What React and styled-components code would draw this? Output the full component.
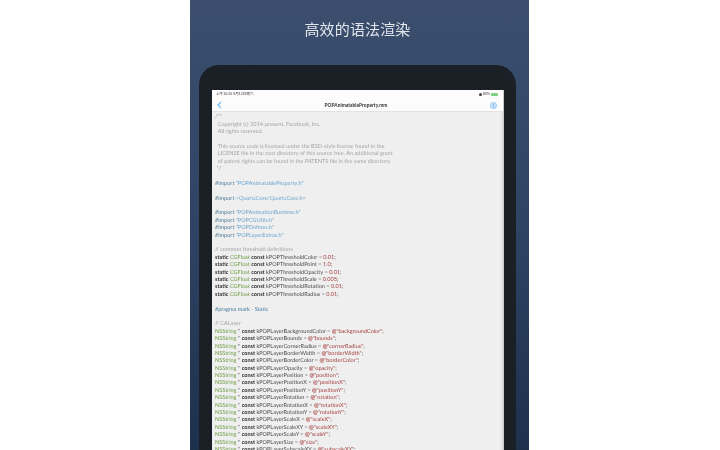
import React from 'react';
import styled, { createGlobalStyle } from 'styled-components';

const GlobalStyle = createGlobalStyle`
  html, body { margin: 0; padding: 0; background: #fff; }
  body { width: 720px; height: 450px; overflow: hidden; }
`;

const Page = styled.div`
  width: 720px;
  height: 450px;
  padding-left: 190px;
  box-sizing: border-box;
  display: flex;
  overflow: hidden;
`;

const Panel = styled.div`
  width: 339px;
  height: 450px;
  padding: 0 13px 0 9px;
  box-sizing: border-box;
  background: linear-gradient(180deg, #3b4e6e 0%, #2f4464 50%, #1d304c 100%);
  overflow: hidden;
`;

const Title = styled.h1`
  margin: 0;
  height: 65px;
  padding-top: 18px;
  box-sizing: border-box;
  text-align: center;
  font: 400 15px/22px "Noto Sans CJK SC", sans-serif;
  letter-spacing: 0.15px;
  color: #e3e6eb;
  filter: blur(0.45px);
`;

const Tablet = styled.div`
  height: 400px;
  padding: 25px 13px 0;
  box-sizing: border-box;
  background: #1b2027;
  border-radius: 20px 20px 0 0;
`;

const Screen = styled.div`
  height: 375px;
  margin-right: -1px;
  background: #efefef;
  overflow: hidden;
  display: flex;
  flex-direction: column;
  border-right: 1px solid #c9cacc;
`;

const StatusBar = styled.div`
  height: 9px;
  padding: 0 5px 0 4px;
  display: flex;
  align-items: center;
  justify-content: space-between;
  background: #fcfcfc;
  font: 400 3.6px/9px "Liberation Sans", "Noto Sans CJK SC", sans-serif;
  color: #333;
  filter: blur(0.45px);
`;

const StatusRight = styled.div`
  display: flex;
  align-items: center;
  gap: 1px;
`;

const Wifi = styled.span`
  width: 3px;
  height: 2.5px;
  border-radius: 50% 50% 50% 50% / 70% 70% 30% 30%;
  background: #444;
`;

const Battery = styled.span`
  width: 7px;
  height: 3px;
  border-radius: 1px;
  background: #7ed283;
`;

const NavBar = styled.div`
  height: 12px;
  padding: 0 6px 0 5px;
  display: flex;
  align-items: center;
  justify-content: space-between;
  background: #fcfcfc;
  border-bottom: 1px solid #e2e2e2;
  filter: blur(0.45px);
`;

const NavTitle = styled.span`
  font: 700 4.9px/12px "Lato", sans-serif;
  color: #333;
`;

const Body = styled.div`
  flex: 1;
  display: flex;
  overflow: hidden;
  filter: blur(0.6px);
`;

const Code = styled.div`
  flex: 1;
  padding: 2.4px 0 0 3px;
  overflow: hidden;
  font: 400 5.55px/7.4px "Lato", sans-serif;
  text-rendering: geometricPrecision;
  color: #555;
`;

const Scrollbar = styled.div`
  width: 2px;
  background: #e2e2e2;
`;

const Line = styled.div`
  height: 7.4px;
  white-space: pre;
`;

const palette = {
  c: ['#a4a4a4', 400],
  m: ['#4a7a9c', 400],
  s: ['#6ca6d0', 400],
  k: ['#2f2f2f', 700],
  t: ['#6f9f45', 400],
  n: ['#4a4a4a', 400],
  r: ['#a5403f', 400],
  a: ['#a5403f', 700],
};

const Tok = styled.span`
  color: ${p => palette[p.$kind][0]};
  font-weight: ${p => palette[p.$kind][1]};
`;

const threshold = (name, val) => [
  ['k', 'static '], ['t', 'CGFloat '], ['k', 'const '], ['n', name + ' = '], ['r', val], ['n', ';'],
];
const layerKey = (name, key) => [
  ['t', 'NSString'], ['n', ' * '], ['k', 'const '], ['n', 'kPOPLayer' + name + ' = '],
  ['a', '@'], ['r', '"' + key + '"'], ['n', ';'],
];
const imp = (s) => [['m', '#import '], ['s', s]];
const note = (s) => [['c', s]];

const lines = [
  note('/**'),
  note('  Copyright (c) 2014-present, Facebook, Inc.'),
  note('  All rights reserved.'),
  [],
  note('  This source code is licensed under the BSD-style license found in the'),
  note('  LICENSE file in the root directory of this source tree. An additional grant'),
  note('  of patent rights can be found in the PATENTS file in the same directory.'),
  note(' */'),
  [],
  imp('"POPAnimatableProperty.h"'),
  [],
  imp('<QuartzCore/QuartzCore.h>'),
  [],
  imp('"POPAnimationRuntime.h"'),
  imp('"POPCGUtils.h"'),
  imp('"POPDefines.h"'),
  imp('"POPLayerExtras.h"'),
  [],
  note('// common threshold definitions'),
  threshold('kPOPThresholdColor', '0.01'),
  threshold('kPOPThresholdPoint', '1.0'),
  threshold('kPOPThresholdOpacity', '0.01'),
  threshold('kPOPThresholdScale', '0.005'),
  threshold('kPOPThresholdRotation', '0.01'),
  threshold('kPOPThresholdRadius', '0.01'),
  [],
  [['m', '#pragma mark - Static']],
  [],
  note('// CALayer'),
  layerKey('BackgroundColor', 'backgroundColor'),
  layerKey('Bounds', 'bounds'),
  layerKey('CornerRadius', 'cornerRadius'),
  layerKey('BorderWidth', 'borderWidth'),
  layerKey('BorderColor', 'borderColor'),
  layerKey('Opacity', 'opacity'),
  layerKey('Position', 'position'),
  layerKey('PositionX', 'positionX'),
  layerKey('PositionY', 'positionY'),
  layerKey('Rotation', 'rotation'),
  layerKey('RotationX', 'rotationX'),
  layerKey('RotationY', 'rotationY'),
  layerKey('ScaleX', 'scaleX'),
  layerKey('ScaleXY', 'scaleXY'),
  layerKey('ScaleY', 'scaleY'),
  layerKey('Size', 'size'),
  layerKey('SubscaleXY', 'subscaleXY'),
];

export default function App() {
  return (
    <Page>
      <GlobalStyle />
      <Panel>
        <Title>高效的语法渲染</Title>
        <Tablet>
          <Screen>
            <StatusBar>
              <span>上午10:20  9月12日周六</span>
              <StatusRight>
                <Wifi />
                <span>83%</span>
                <Battery />
              </StatusRight>
            </StatusBar>
            <NavBar>
              <svg width="5" height="8" viewBox="0 0 5 8">
                <path d="M4 .8 1 4l3 3.2" fill="none" stroke="#6db8f2" strokeWidth="1.2" />
              </svg>
              <NavTitle>POPAnimatableProperty.mm</NavTitle>
              <svg width="7" height="7" viewBox="0 0 7 7">
                <circle cx="3.5" cy="3.5" r="3" fill="#cfe6fa" stroke="#8cc6f4" strokeWidth="1" />
                <rect x="3" y="2" width="1" height="3.2" fill="#7dbdf2" />
              </svg>
            </NavBar>
            <Body>
              <Code>
                {lines.map((toks, i) => (
                  <Line key={i}>
                    {toks.map(([kind, text], j) => (
                      <Tok key={j} $kind={kind}>{text}</Tok>
                    ))}
                  </Line>
                ))}
              </Code>
              <Scrollbar />
            </Body>
          </Screen>
        </Tablet>
      </Panel>
    </Page>
  );
}
